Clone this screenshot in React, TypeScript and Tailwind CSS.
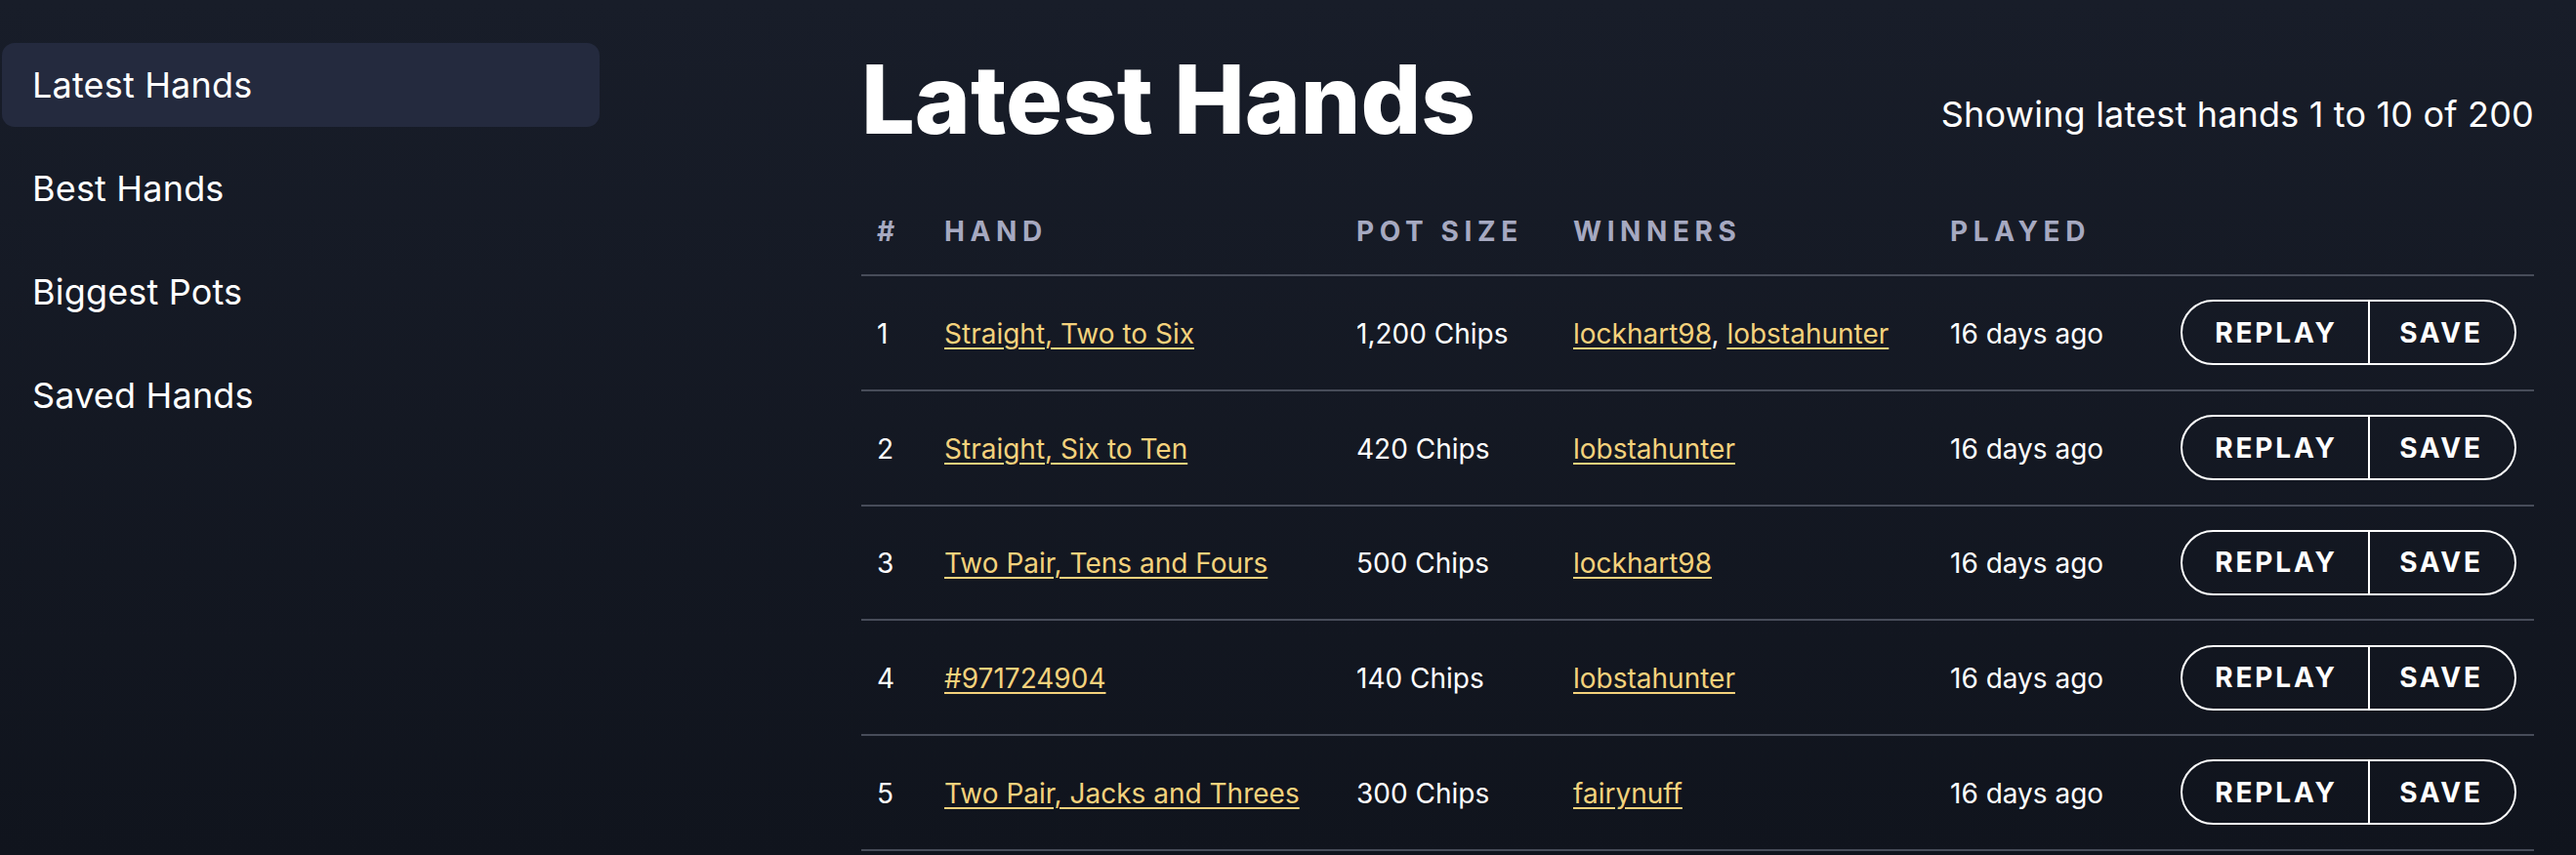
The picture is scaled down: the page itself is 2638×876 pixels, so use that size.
import React from "react";

interface Hand {
  id: number;
  name: string;
  pot: string;
  winners: string[];
  played: string;
}

const hands: Hand[] = [
  { id: 1, name: "Straight, Two to Six", pot: "1,200 Chips", winners: ["lockhart98", "lobstahunter"], played: "16 days ago" },
  { id: 2, name: "Straight, Six to Ten", pot: "420 Chips", winners: ["lobstahunter"], played: "16 days ago" },
  { id: 3, name: "Two Pair, Tens and Fours", pot: "500 Chips", winners: ["lockhart98"], played: "16 days ago" },
  { id: 4, name: "#971724904", pot: "140 Chips", winners: ["lobstahunter"], played: "16 days ago" },
  { id: 5, name: "Two Pair, Jacks and Threes", pot: "300 Chips", winners: ["fairynuff"], played: "16 days ago" },
];

const navItems = ["Latest Hands", "Best Hands", "Biggest Pots", "Saved Hands"];

const cols = "grid grid-cols-[69px_422px_222px_386px_236px_1fr]";
const link = "text-[#f4d27c] underline decoration-2 underline-offset-4";

export default function App() {
  return (
    <div className="min-h-screen flex bg-gradient-to-b from-[#181d29] to-[#10141d] text-white font-['Inter','Noto_Sans',sans-serif]">
      <nav className="w-[614px] shrink-0 pl-[2px] pt-[44px] flex flex-col gap-5">
        {navItems.map((item, i) => (
          <a
            key={item}
            href="#"
            className={
              "h-[86px] rounded-[13px] px-[31px] flex items-center text-[36px] tracking-[0.005em] " +
              (i === 0 ? "bg-[#242a3e]" : "")
            }
          >
            {item}
          </a>
        ))}
      </nav>

      <main className="flex-1 pl-[268px] pr-[43px]">
        <div className="pt-[53px] flex justify-between items-end">
          <h1 className="text-[97px] font-extrabold leading-none">Latest Hands</h1>
          <p className="text-[36px] leading-[1.5] mb-[6px] tracking-[0.005em]">Showing latest hands 1 to 10 of 200</p>
        </div>

        <div className="mt-[43px]">
          <div className={cols + " h-[90px] items-center border-b-2 border-[#474c59] text-[28px] font-bold tracking-[0.2em] text-[#a6a9c1]"}>
            <div className="px-4">#</div>
            <div className="px-4">HAND</div>
            <div className="px-4">POT SIZE</div>
            <div className="px-4">WINNERS</div>
            <div className="px-4">PLAYED</div>
            <div className="px-4"></div>
          </div>

          {hands.map((h) => (
            <div key={h.id} className={cols + " h-[117.75px] items-center border-b-2 border-[#474c59] text-[28px]"}>
              <div className="px-4 pt-[2px]">{h.id}</div>
              <div className="px-4 pt-[2px]">
                <a href="#" className={link}>{h.name}</a>
              </div>
              <div className="px-4 pt-[2px]">{h.pot}</div>
              <div className="px-4 pt-[2px]">
                {h.winners.map((w, i) => (
                  <React.Fragment key={w}>
                    {i > 0 && ", "}
                    <a href="#" className={link}>{w}</a>
                  </React.Fragment>
                ))}
              </div>
              <div className="px-4 pt-[2px]">{h.played}</div>
              <div className="px-4">
                <div className="inline-flex h-[67px] rounded-full border-2 border-white overflow-hidden text-[28px] font-bold tracking-[0.1em]">
                  <button className="w-[192px] flex items-center justify-center border-r-2 border-white pl-[2px]">REPLAY</button>
                  <button className="w-[148px] flex items-center justify-center pr-[2px]">SAVE</button>
                </div>
              </div>
            </div>
          ))}
        </div>
      </main>
    </div>
  );
}
